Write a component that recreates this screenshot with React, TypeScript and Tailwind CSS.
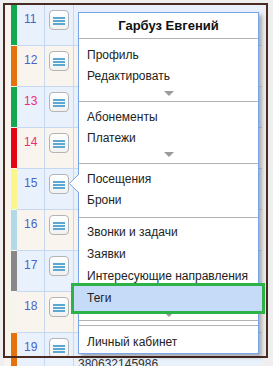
const rows = [
  { n: 11, stripe: "bg-[#13a84f]", pink: false, phone: "" },
  { n: 12, stripe: "bg-[#e4730f]", pink: false, phone: "" },
  { n: 13, stripe: "bg-[#13a84f]", pink: true, phone: "" },
  { n: 14, stripe: "bg-[#e30613]", pink: true, phone: "" },
  { n: 15, stripe: "bg-[#fbf58c]", pink: false, phone: "" },
  { n: 16, stripe: "bg-[#b3d9e6]", pink: false, phone: "" },
  { n: 17, stripe: "bg-[#888888]", pink: false, phone: "" },
  { n: 18, stripe: "bg-[#f7f4ee]", pink: false, phone: "" },
  { n: 19, stripe: "bg-[#e4730f]", pink: false, phone: "380632145986" },
];

function MenuIcon() {
  return (
    <div className="w-[20px] h-[20px] rounded-[4px] border border-[#b4b4b4] bg-gradient-to-b from-white to-[#f1f1f1] flex flex-col items-center justify-center gap-[1px] pt-[1px]">
      <span className="block w-[12px] h-[2px] bg-[#5ba9d2]" />
      <span className="block w-[12px] h-[2px] bg-[#5ba9d2]" />
      <span className="block w-[12px] h-[2px] bg-[#5ba9d2]" />
    </div>
  );
}

function Tri({ className }: { className: string }) {
  return (
    <div className={"flex justify-center " + className}>
      <svg width="10" height="5" viewBox="0 0 10 5">
        <polygon points="0,0 10,0 5,5" fill="#9b9b9b" />
      </svg>
    </div>
  );
}

function Item({ text, h = "h-[21px] leading-[21px]" }: { text: string; h?: string }) {
  return <div className={h + " pl-[8px] text-[12px] text-[#222] whitespace-nowrap"}>{text}</div>;
}

const Line = () => <div className="h-px bg-[#b3b3b3]" />;

export default function App() {
  return (
    <div className="relative w-[273px] h-[366px] overflow-hidden bg-[#efefef] font-['Liberation_Sans',Arial,sans-serif]">
      <div className="pt-[5px] pl-[4px] w-[262px]">
        {rows.map((r, i) => {
          const bg = i % 2 === 0 ? "bg-[#e9f1fd]" : "bg-[#f9f5ee]";
          return (
            <div key={r.n} className="flex h-[41px]">
              <div className="w-[7px] bg-[#f7f4ee]" />
              <div className="w-[6px] flex flex-col bg-[#f7f4ee]">
                <div className={"flex-1 " + r.stripe} />
                <div className="h-px" />
              </div>
              <div className={"w-[28px] pl-[7px] pt-[7px] border-b border-r border-[#c6d7f1] text-[12px] leading-[14px] " + bg + (r.pink ? " text-[#ec2f73]" : " text-[#4a63c8]")}>
                {r.n}
              </div>
              <div className={"w-[29px] pl-[4px] pt-[5px] border-b border-r border-[#c6d7f1] " + bg}>
                <MenuIcon />
              </div>
              <div className={"flex-1 pl-[4px] pt-[7px] border-b border-[#c6d7f1] text-[12px] leading-[16px] text-[#333] whitespace-nowrap " + bg}>
                {r.phone && (
                  <>
                    <div className="h-[16px]" />
                    <div>{r.phone}</div>
                  </>
                )}
              </div>
            </div>
          );
        })}
      </div>

      <div className="absolute left-[3px] top-[3px] w-[265px] h-[355px] border-2 border-[#4a2b24] pointer-events-none" />

      <div className="absolute left-[78px] top-[12px] w-[181px] h-[342px] bg-white border border-[#79a5e8] shadow-[3px_3px_4px_rgba(0,0,0,0.3)]">
        <svg className="absolute left-[-10px] top-[161px]" width="11" height="19" viewBox="0 0 11 19">
          <polygon points="0.5,9.5 11,-0.5 11,19.5" fill="#ffffff" />
          <polyline points="10,0 0.5,9.5 10,19" fill="none" stroke="#79a5e8" strokeWidth="1" />
        </svg>

        <div className="h-[25px] flex items-center justify-center font-bold text-[13px] text-[#111]">Гарбуз Евгений</div>
        <Line />
        <div className="pt-[6px]">
          <Item text="Профиль" />
          <Item text="Редактировать" />
          <Tri className="pt-[4px] pb-[5px]" />
        </div>
        <Line />
        <div className="pt-[5px]">
          <Item text="Абонементы" />
          <Item text="Платежи" />
          <Tri className="pt-[3px] pb-[6px]" />
        </div>
        <Line />
        <div className="pt-[5px] pb-[6px]">
          <Item text="Посещения" />
          <Item text="Брони" />
        </div>
        <Line />
        <div className="pt-[3px]">
          <Item text="Звонки и задачи" h="h-[22px] leading-[22px]" />
          <Item text="Заявки" h="h-[22px] leading-[22px]" />
          <Item text="Интересующие направления" h="h-[22px] leading-[22px]" />
          <div className="relative h-[22px] leading-[22px] pl-[8px] text-[12px] text-[#222]">
            <span className="absolute -top-[4px] -bottom-[5px] -left-[8px] -right-[7px] border-[3px] border-[#2db24a] bg-[#c6dbf8]" />
            <span className="relative">Теги</span>
          </div>
          <Tri className="pt-[3px] pb-[3px]" />
        </div>
        <Line />
        <div className="h-[4px]" />
        <Line />
        <div className="pt-[6px]">
          <Item text="Личный кабинет" />
        </div>
      </div>
    </div>
  );
}
